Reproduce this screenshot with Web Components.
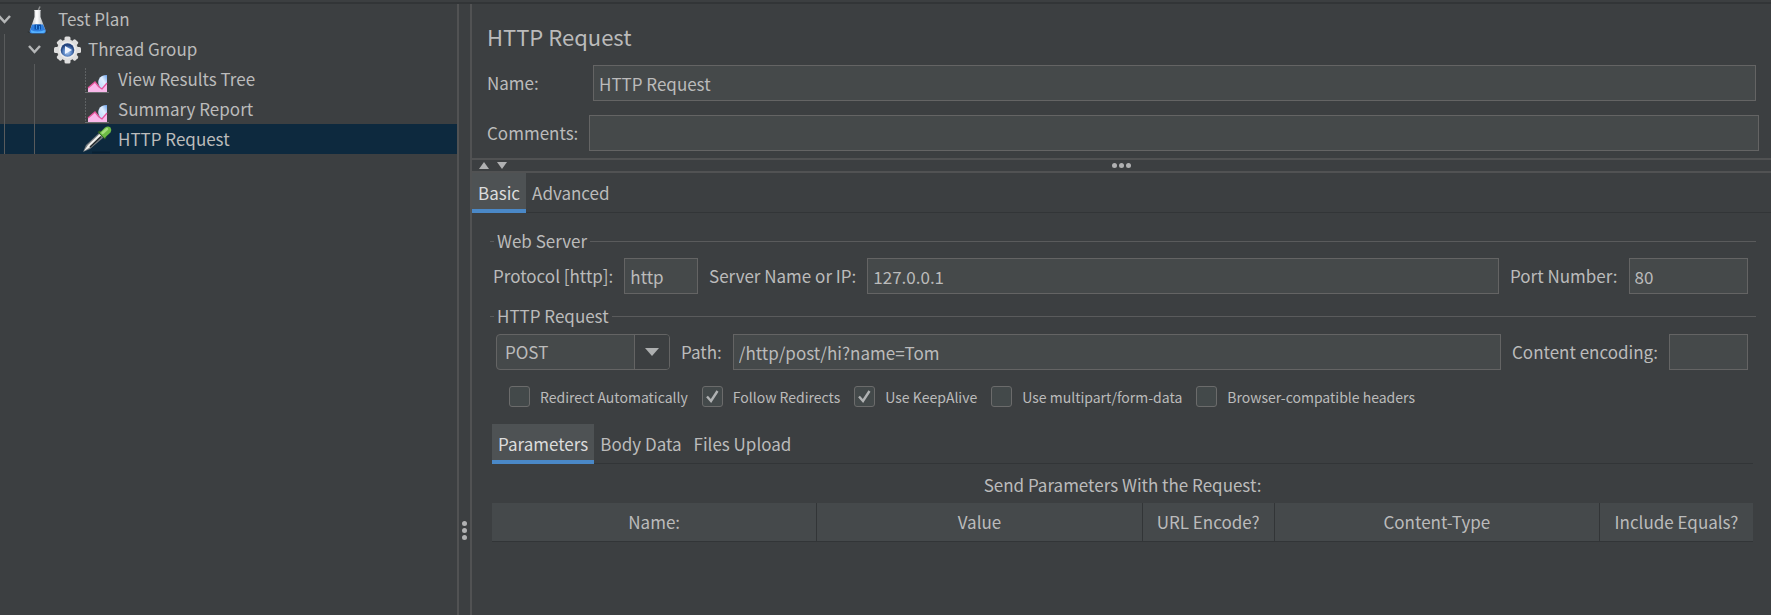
<!DOCTYPE html>
<html lang="en">
<head>
<meta charset="utf-8">
<title>HTTP Request</title>
<style>
:root{
  --bg:#3c3f41;--field:#45494a;--edge:#646464;--rule:#515253;--shade:#323537;
  --text:#bbbbbb;--bright:#dcdcdc;--select:#0d293e;--accent:#4a88c7;--tab:#4e5254;
}
body{margin:0;background:var(--bg);color:var(--text);
  font:17px/24px "Noto Sans CJK SC","Noto Sans",sans-serif}
</style>
</head>
<body>
<jm-workbench>
  <jm-tree slot="tree">
    <jm-node level="0" icon="flask" open>Test Plan</jm-node>
    <jm-node level="1" icon="gear" open>Thread Group</jm-node>
    <jm-node level="2" icon="chart">View Results Tree</jm-node>
    <jm-node level="2" icon="chart">Summary Report</jm-node>
    <jm-node level="2" icon="dropper" selected>HTTP Request</jm-node>
  </jm-tree>
  <jm-request-editor></jm-request-editor>
</jm-workbench>

<script>
const define = (name, html, setup) => {
  const template = document.createElement('template');
  template.innerHTML = html;
  customElements.define(name, class extends HTMLElement {
    connectedCallback() {
      if (this.shadowRoot) return;
      const root = this.attachShadow({ mode: 'open' });
      root.append(template.content.cloneNode(true));
      if (setup) setup(this, root);
    }
  });
};

const icons = {
  flask: `<svg width="28" height="30" viewBox="0 0 28 30">
    <defs><linearGradient id="g" x2="1"><stop stop-color="#aeb2b5"/><stop offset=".45" stop-color="#fff"/><stop offset="1" stop-color="#9da3a8"/></linearGradient></defs>
    <ellipse cx="13.5" cy="28" rx="10" ry="1.5" fill="#25282a" opacity=".6"/>
    <path d="M13.5 8 16 2.5" stroke="#8b8d8e" stroke-width="1.500"/>
    <path d="M10 6h7l-.5 1v6l5 13q.5 3-2 3H8q-3 0-2-3l4.500-13V7z" fill="url(#g)"/>
    <path d="M8 20.500h11l2.500 6q.5 3-2 3H8q-3 0-2-3z" fill="#2f7fe0"/>
    <path d="M7 26q6.500 3 13.500 0l.5 1q0 2-2 2H8.500Q6.500 29 7 26z" fill="#55b2ff"/>
    <path d="M10.500 20.500h6.500v5h-6.500z" fill="#0a4ea6"/><path d="M12.500 21v4M15.500 22v4" stroke="#3b93ec"/>
  </svg>`,
  gear: `<svg width="28" height="30" viewBox="0 0 28 30">
    <defs><radialGradient id="b" cx=".5" cy=".65"><stop stop-color="#b9d3f5"/><stop offset=".6" stop-color="#5a85c4"/><stop offset="1" stop-color="#25457f"/></radialGradient></defs>
    <g fill="#dedede" transform="translate(13.5 16)">
      <circle r="10.500"/>
      <rect x="-3" y="-13.500" width="6" height="27" rx="1.500"/><rect x="-13.500" y="-3" width="27" height="6" rx="1.500"/>
      <g transform="rotate(45)"><rect x="-3" y="-13" width="6" height="26" rx="1.500"/><rect x="-13" y="-3" width="26" height="6" rx="1.500"/></g>
      <circle r="8.500" fill="#ececec"/><circle r="6.800" fill="url(#b)"/>
      <path d="M-2.500-4 4.500 0-2.500 4z" fill="#eef4ff"/>
    </g>
  </svg>`,
  chart: `<svg width="28" height="30" viewBox="0 0 28 30">
    <defs><linearGradient id="c" x1="1" x2="0" y2="1"><stop stop-color="#6aa3ee"/><stop offset=".4" stop-color="#e2efff"/><stop offset="1" stop-color="#b7d2fa"/></linearGradient></defs>
    <path d="M1.500 4v24" stroke="#5e6163" stroke-dasharray="2 1"/><path d="M1 28.500h24" stroke="#6b6e70"/>
    <path d="M4 28v-4l7-6 5 5 7-4v9z" fill="#f9b8ea"/>
    <path d="M4 24l7-6 4 5" fill="none" stroke="#e6559c" stroke-width="1.300"/>
    <path d="M23 11q-6 0-8 4-2 4 1 8l2 2 5-6z" fill="url(#c)"/>
    <path d="M15 23l3 2 5-6" fill="none" stroke="#e6559c" stroke-width="1.300"/>
  </svg>`,
  dropper: `<svg width="28" height="30" viewBox="0 0 28 30">
    <path d="M8 28.500h18" stroke="#081c2c" stroke-width="2" opacity=".6"/>
    <path d="M-1 28 2 21 15 9l4.500 4.500L6 25z" fill="#767c80"/>
    <path d="M0 27 4 21 15.500 10l2 2L5 24z" fill="#f1f1ee"/>
    <path d="M6 23 17 12.500" stroke="#22282b" stroke-width="1.500"/>
    <path d="M13.500 8 16 6.500l6.500 6.500-1.500 2.500z" fill="#315f22"/>
    <path d="M15.500 9 21 3.500q3-2 5.500 0 1.500 2 0 5L20.500 14z" fill="#6dbb45"/>
    <path d="M18.500 9 23 5" stroke="#a4dc7c" stroke-width="2.500" stroke-linecap="round"/>
  </svg>`
};

define('jm-node', `
<style>
:host{display:flex;align-items:center;height:30px}
:host([selected]){background:var(--select)}
.lead{display:contents}
.guide{flex:none;width:30px;height:100%;background:linear-gradient(#595b5c,#595b5c) 4px 0/1px 100% no-repeat}
.toggle{flex:none;width:12px;height:30px;margin-right:12px;padding:0;border:0;background:none}
.toggle svg,.icon svg{display:block;overflow:visible}
.icon{flex:none;width:28px;height:30px;margin-right:6px}
</style>
<span class="lead"></span>
<span class="icon"></span><span><slot></slot></span>`,
(host, root) => {
  host.setAttribute('role', 'treeitem');
  const level = Number(host.getAttribute('level'));
  const toggle = host.hasAttribute('open')
    ? `<button class="toggle" aria-label="Collapse"><svg width="12" height="30"><path d="M-1 12 4.500 18 10 12" fill="none" stroke="#b4b6b7" stroke-width="2.500"/></svg></button>`
    : '<span class="toggle"></span>';
  root.querySelector('.lead').innerHTML = '<span class="guide"></span>'.repeat(level) + toggle;
  root.querySelector('.icon').innerHTML = icons[host.getAttribute('icon')];
});

define('jm-tree', `
<style>:host{display:block}</style>
<slot></slot>`, host => host.setAttribute('role', 'tree'));

define('jm-workbench', `
<style>
:host{display:grid;grid-template:2px 1fr/minmax(200px,457px) 15px minmax(0,1fr);min-height:100vh;
  box-sizing:border-box;padding-top:2px}
.top{grid-column:1/-1;background:var(--shade)}
.side{overflow:hidden}
.split{box-sizing:border-box;border:solid var(--rule);border-width:0 2px;
  display:flex;flex-direction:column;align-items:center;gap:2px}
.split::before{content:"";flex:7}
.split::after{content:"";flex:1}
i{width:5px;height:5px;border-radius:50%;background:#b0b1b2}
</style>
<div class="top"></div>
<div class="side"><slot name="tree"></slot></div>
<div class="split" role="separator"><i></i><i></i><i></i></div>
<main><slot></slot></main>`);

define('jm-field', `
<style>
:host{display:flex;align-items:center;min-width:0}
label{flex:none;min-width:var(--label,0);margin-right:11px;white-space:nowrap}
input{flex:1;min-width:0;width:0;height:36px;box-sizing:border-box;margin:0;padding:0 5px;
  border:1px solid var(--edge);border-radius:0;background:var(--field);color:inherit;font:inherit;outline:0}
</style>
<label for="f"></label><input id="f" type="text">`,
(host, root) => {
  root.querySelector('label').textContent = host.getAttribute('label');
  root.querySelector('input').value = host.getAttribute('value') || '';
});

define('jm-check', `
<style>
:host{display:flex;align-items:center;font-size:14px;line-height:20px}
input{appearance:none;width:21px;height:21px;margin:0 10px 0 0;box-sizing:border-box;border:1px solid #6b6b6b;
  border-radius:3px;background:#43494a}
input:checked{background:#43494a url("data:image/svg+xml,%3Csvg xmlns='http://www.w3.org/2000/svg' viewBox='0 0 19 19'%3E%3Cpath d='M4 9.500 8 14 14.500 4' fill='none' stroke='%23b0b2b3' stroke-width='2.400'/%3E%3C/svg%3E") center/19px no-repeat}
label{white-space:nowrap}
</style>
<input id="c" type="checkbox"><label for="c"><slot></slot></label>`,
(host, root) => { root.querySelector('input').checked = host.hasAttribute('checked'); });

define('jm-method', `
<style>
:host{display:grid;width:174px;height:36px;flex:none}
select,.drop{grid-area:1/1}
select{appearance:none;box-sizing:border-box;width:100%;height:36px;margin:0;padding:0 44px 0 8px;
  border:1px solid var(--edge);border-radius:4px;background:var(--field);color:inherit;font:inherit}
.drop{justify-self:end;width:34px;margin:1px;border-left:1px solid var(--edge);border-radius:0 3px 3px 0;
  background:var(--bg);display:flex;align-items:center;justify-content:center;pointer-events:none}
</style>
<select aria-label="Method"><option>POST</option><option>GET</option><option>PUT</option><option>DELETE</option></select>
<span class="drop"><svg width="14" height="8"><path d="M0 0h14L7 8z" fill="#adafb0"/></svg></span>`);

define('jm-group', `
<style>
:host{display:block}
fieldset{margin:0;padding:0;border:0;min-width:0}
legend{display:flex;align-items:center;width:100%;padding:0;height:24px;gap:3px}
legend::before,legend::after{content:"";height:1px;background:#5a5b5c}
legend::before{width:4px}
legend::after{flex:1}
</style>
<fieldset><legend><span></span></legend><slot></slot></fieldset>`,
(host, root) => { root.querySelector('span').textContent = host.getAttribute('label'); });

define('jm-tabs', `
<style>
:host{display:flex;height:40px;background:linear-gradient(var(--shade),var(--shade)) 0 100%/100% 1px no-repeat}
button{margin:0;padding:0 6px;border:0;background:none;color:inherit;font:inherit;white-space:nowrap}
button[aria-selected=true]{background:var(--tab);color:var(--bright);box-shadow:inset 0 -4px var(--accent)}
</style>`,
(host, root) => {
  host.setAttribute('role', 'tablist');
  host.getAttribute('tabs').split('|').forEach((name, i) => {
    const button = document.createElement('button');
    button.setAttribute('role', 'tab');
    button.setAttribute('aria-selected', i === 0);
    button.textContent = name;
    root.append(button);
  });
});

define('jm-params', `
<style>
:host{display:block}
table{width:100%;table-layout:fixed;border-collapse:separate;border-spacing:0}
caption{padding:9px 0 6px;line-height:24px}
th{height:39px;box-sizing:border-box;padding:0;font-weight:400;background:#45494b;
  border-right:1px solid var(--shade);border-bottom:1px solid var(--shade);white-space:nowrap}
th:last-child{border-right:0;width:153px}
th:nth-child(3){width:132px}
</style>
<table>
<caption>Send Parameters With the Request:</caption>
<thead><tr><th>Name:</th><th>Value</th><th>URL Encode?</th><th>Content-Type</th><th>Include Equals?</th></tr></thead>
</table>`);

define('jm-request-editor', `
<style>
:host{display:block}
header{padding:18px 12px 7px 15px}
h1{margin:0 0 15px;font-size:22px;line-height:28px;font-weight:400}
.name{--label:95px;margin:0 3px 14px 0}
.bar{display:grid;grid-template-columns:1fr auto 1fr;align-items:center;height:11px;
  border:solid var(--rule);border-width:2px 0}
.arrows{display:flex;gap:8px;padding-left:7px}
.arrows button{display:flex;width:10px;height:7px;padding:0;border:0;background:none}
.dots{display:flex;gap:2px}
i{width:5px;height:5px;border-radius:50%;background:#b0b1b2}
.body{padding:16px 15px 0 18px}
.row{display:flex;align-items:center;gap:11px;padding:5px 8px 10px 3px}
.second{padding:6px 8px 0 6px}
.grow{flex:1}
.protocol{width:205px}
.port{width:238px}
.encoding{width:236px}
.checks{display:flex;flex-wrap:wrap;gap:14px;padding:16px 0 17px 19px}
.params{margin:0 3px 0 2px}
</style>
<header>
  <h1>HTTP Request</h1>
  <jm-field class="name" label="Name:" value="HTTP Request"></jm-field>
  <jm-field label="Comments:"></jm-field>
</header>
<div class="bar" role="separator">
  <span class="arrows">
    <button aria-label="Collapse"><svg width="10" height="7"><path d="M0 7h10L5 0z" fill="#b0b1b2"/></svg></button>
    <button aria-label="Expand"><svg width="10" height="7"><path d="M0 0h10L5 7z" fill="#b0b1b2"/></svg></button>
  </span>
  <span class="dots"><i></i><i></i><i></i></span>
</div>
<jm-tabs tabs="Basic|Advanced"></jm-tabs>
<div class="body">
  <jm-group label="Web Server">
    <div class="row">
      <jm-field class="protocol" label="Protocol [http]:" value="http"></jm-field>
      <jm-field class="grow" label="Server Name or IP:" value="127.0.0.1"></jm-field>
      <jm-field class="port" label="Port Number:" value="80"></jm-field>
    </div>
  </jm-group>
  <jm-group label="HTTP Request">
    <div class="row second">
      <jm-method></jm-method>
      <jm-field class="grow" label="Path:" value="/http/post/hi?name=Tom"></jm-field>
      <jm-field class="encoding" label="Content encoding:"></jm-field>
    </div>
    <div class="checks">
      <jm-check>Redirect Automatically</jm-check>
      <jm-check checked>Follow Redirects</jm-check>
      <jm-check checked>Use KeepAlive</jm-check>
      <jm-check>Use multipart/form-data</jm-check>
      <jm-check>Browser-compatible headers</jm-check>
    </div>
  </jm-group>
  <div class="params">
    <jm-tabs tabs="Parameters|Body Data|Files Upload"></jm-tabs>
    <jm-params></jm-params>
  </div>
</div>`);
</script>
</body>
</html>
